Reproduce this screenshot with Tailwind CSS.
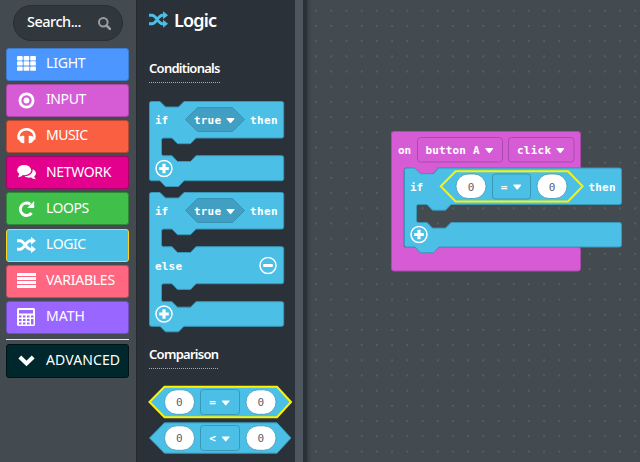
<!DOCTYPE html>
<html lang="en">
<head>
<meta charset="utf-8">
<title>Block editor</title>
<script src="https://cdn.jsdelivr.net/npm/@tailwindcss/browser@4"></script>
</head>
<body class="w-[640px] h-[462px] overflow-hidden bg-[#434a50] font-['Noto_Sans',sans-serif]">
<svg class="hidden">
  <defs>
    <symbol id="shuffle" viewBox="0 0 20 17"><path d="M0 4h3.200c4.600 0 6.200 9 11 9h2M0 13h3.200c4.600 0 6.200-9 11-9h2" fill="none" stroke="currentColor" stroke-width="3"/><path d="M14.800-.2l5.200 4.200-5.200 4.200zM14.800 8.800l5.200 4.200-5.200 4.200z" fill="currentColor"/></symbol>
    <symbol id="plus" viewBox="0 0 18 18"><circle cx="9" cy="9" r="8" fill="none" stroke="#fff" stroke-width="1.500"/><path d="M9 4.200v9.600M4.200 9h9.600" stroke="#fff" stroke-width="3.200"/></symbol>
    <symbol id="minus" viewBox="0 0 18 18"><circle cx="9" cy="9" r="8" fill="none" stroke="#fff" stroke-width="1.500"/><path d="M4.200 9h9.600" stroke="#fff" stroke-width="3"/></symbol>
    <symbol id="caret" viewBox="0 0 8 6"><path d="M.8.500h6.400q.8 0 .3.900L4.600 4.900q-.6.700-1.200 0L.5 1.400Q0 .5.800.500z" fill="#fff"/></symbol>
  </defs>
</svg>
<div class="flex h-full bg-[#434a50]">
  <nav class="w-[137px] shrink-0 pl-[6px] pr-[7px] pt-[5px] border-r border-[#24292d]">
    <div class="ml-[7px] w-[110px] h-[36px] rounded-full bg-[#30373d] border border-[#292f34] flex items-center justify-between pl-[13px] pr-[11px] text-white text-[14.500px]">
      <span class="-mt-[2px] tracking-[-0.5px] font-medium">Search...</span>
      <svg class="w-[13px] h-[13px]" viewBox="0 0 13 13" fill="none" stroke="#999da0"><circle cx="5.300" cy="5.300" r="4.300" stroke-width="2"/><path d="M8.500 8.500l3.500 3.500" stroke-width="2.500" stroke-linecap="round"/></svg>
    </div>
    <div class="mt-[6.600px] flex flex-col gap-[3.200px] text-white text-[14px]">
      <div class="h-[33px] rounded-[3px] border border-[#3e7cd0] bg-[#4c97ff] flex items-center pl-[10px] gap-[10px]">
        <svg class="w-[19px] h-[15px] -mt-px" viewBox="0 0 19 15" fill="#fff"><rect width="5.700" height="4.400" rx=".9"/><rect x="6.600" width="5.700" height="4.400" rx=".9"/><rect x="13.200" width="5.700" height="4.400" rx=".9"/><rect y="5.200" width="5.700" height="4.400" rx=".9"/><rect x="6.600" y="5.200" width="5.700" height="4.400" rx=".9"/><rect x="13.200" y="5.200" width="5.700" height="4.400" rx=".9"/><rect y="10.400" width="5.700" height="4.400" rx=".9"/><rect x="6.600" y="10.400" width="5.700" height="4.400" rx=".9"/><rect x="13.200" y="10.400" width="5.700" height="4.400" rx=".9"/></svg>
        <span class="-mt-[3px] tracking-[-0.2px]">LIGHT</span></div>
      <div class="h-[33px] rounded-[3px] border border-[#ac46ab] bg-[#d65cd6] flex items-center pl-[10px] gap-[10px]">
        <svg class="w-[19px] h-[17px]" viewBox="0 0 19 17"><circle cx="9.500" cy="8.500" r="6.600" fill="none" stroke="#fff" stroke-width="2.800"/><circle cx="9.500" cy="8.500" r="2.900" fill="#fff"/></svg>
        <span class="-mt-[3px] tracking-[-0.4px]">INPUT</span></div>
      <div class="h-[33px] rounded-[3px] border border-[#b54a31] bg-[#f95f40] flex items-center pl-[10px] gap-[10px]">
        <svg class="w-[19px] h-[16px]" viewBox="0 0 19 16"><path d="M2 11.500C.3 6 3.700 1.300 9.500 1.300S18.700 6 17 11.500" fill="none" stroke="#fff" stroke-width="2.500"/><path d="M1.600 10.500C2.500 8 5 7.600 7.300 8v7.300c-2.500-.1-5-1.300-5.700-4.800zM17.400 10.500C16.500 8 14 7.600 11.700 8v7.300c2.500-.1 5-1.300 5.700-4.800z" fill="#fff"/></svg>
        <span class="-mt-[3px] tracking-[-0.5px]">MUSIC</span></div>
      <div class="h-[33px] rounded-[3px] border border-[#a80069] bg-[#e3008c] flex items-center pl-[10px] gap-[10px]">
        <svg class="w-[19px] h-[15px]" viewBox="0 0 19 15" fill="#fff"><ellipse cx="7.200" cy="5.200" rx="7" ry="5.100"/><path d="M2.500 8L1 12.300Q4.500 12 6.500 9.500z"/><path d="M15.600 4.200c3.600 1.300 4.500 5 1.600 7.100.2 1.200.7 2 1.600 2.900-1.900.1-3.300-.5-4.500-1.600-2.900.5-5.400-.2-6.800-1.500 5 0 8.600-2.700 8.100-6.900z"/></svg>
        <span class="-mt-[3px] tracking-[-0.35px]">NETWORK</span></div>
      <div class="h-[33px] rounded-[3px] border border-[#2f8a38] bg-[#40bf4a] flex items-center pl-[10px] gap-[10px]">
        <svg class="w-[19px] h-[16px]" viewBox="0 0 19 16"><path d="M14.500 12A6.200 6.200 0 1 1 13.200 3.200" fill="none" stroke="#fff" stroke-width="3"/><path d="M17.200 0v7h-7z" fill="#fff"/></svg>
        <span class="-mt-[3px] tracking-[-0.5px]">LOOPS</span></div>
      <div class="h-[33px] rounded-[3px] border border-[#ffd21e] bg-[#4bbfe6] flex items-center pl-[10px] gap-[10px]">
        <svg class="w-[19px] h-[16px]"><use href="#shuffle"/></svg>
        <span class="-mt-[3px] tracking-[-0.4px]">LOGIC</span></div>
      <div class="h-[33px] rounded-[3px] border border-[#c04d61] bg-[#ff6680] flex items-center pl-[10px] gap-[10px]">
        <svg class="w-[19px] h-[15px] -mt-[2px]" viewBox="0 0 19 15"><path d="M0 1.500h19M0 5.500h19M0 9.500h19M0 13.500h19" stroke="#fff" stroke-width="3"/></svg>
        <span class="-mt-[3px] tracking-[-0.25px]">VARIABLES</span></div>
      <div class="h-[33px] rounded-[3px] border border-[#744dc2] bg-[#9966ff] flex items-center pl-[10px] gap-[10px]">
        <svg class="w-[19px] h-[18px]" viewBox="0 0 19 18"><path fill="#fff" fill-rule="evenodd" d="M1.500 0h15q1.500 0 1.500 1.500v15q0 1.500-1.500 1.500h-15Q0 18 0 16.500v-15Q0 0 1.500 0zM2 2v3.500h14V2zM2 7.500v2h2.500v-2zM6 7.500v2h2.500v-2zM10 7.500v2h2.500v-2zM14 7.500v2h2.500v-2zM2 11v2h2.500v-2zM6 11v2h2.500v-2zM10 11v2h2.500v-2zM14 11v5.500h2.500V11zM2 14.500v2h2.500v-2zM6 14.500v2h2.500v-2zM10 14.500v2h2.500v-2z"/></svg>
        <span class="-mt-[3px]">MATH</span></div>
    </div>
    <div class="mt-[5px] h-px bg-[#e8eaeb]"></div>
    <div class="mt-[4px] h-[34px] rounded-[3px] border border-[#001417] bg-[#00272b] flex items-center pl-[10px] gap-[10px] text-white text-[14px]">
      <svg class="w-[19px] h-[13px]" viewBox="0 0 19 13"><path d="M2.800 3l6.700 6.500L16.200 3" fill="none" stroke="#fff" stroke-width="4"/></svg>
      <span class="-mt-[3px] tracking-[0.1px]">ADVANCED</span></div>
  </nav>

  <section class="w-[158px] shrink-0 bg-[#2b3138] pl-[12px] text-white">
    <div class="h-[38px] flex items-center gap-[6px]">
      <svg class="w-[19px] h-[17px] text-[#4bbfe6]"><use href="#shuffle"/></svg>
      <h1 class="text-[18px] font-semibold leading-none pt-[2px] tracking-[-0.8px]">Logic</h1>
    </div>
    <h2 class="mt-[21px] w-fit h-[24px] text-[13px] leading-[18px] font-semibold tracking-[-0.72px] border-b border-dotted border-[#a7abae]">Conditionals</h2>
    <svg class="mt-[17px] block w-[146px] h-[92px] overflow-visible font-['DejaVu_Sans_Mono',monospace] font-bold text-[11px]" viewBox="149 100 146 92" fill="#fff">
      <path fill="#4bbfe6" stroke="#3898b8" d="M151.500 101.500H160l5.500 5.500h13l5.500-5.500h97.700q2 0 2 2V136q0 2-2 2H196l-5.500 5.700h-13L172 138h-8.500q-2 0-2 2v13.700q0 2 2 2h8.500l5.500 5.800h13l5.500-5.800h85.700q2 0 2 2v21q0 2-2 2H184l-5.500 5.800h-13l-5.500-5.800h-8.500q-2 0-2-2v-75.200q0-2 2-2z"/>
      <path fill="#409fc2" stroke="#3793b3" d="M185.500 119.500l12-12H232.500l12 12-12 12H197.500z"/>
      <text x="155" y="124" textLength="13">if</text><text x="194" y="124" textLength="27">true</text><text x="250" y="124" textLength="27.500">then</text>
      <use href="#caret" x="226" y="117.500" width="9" height="6.500"/>
      <use href="#plus" x="155" y="159.500" width="18" height="18"/>
    </svg>
    <svg class="block w-[146px] h-[146px] overflow-visible font-['DejaVu_Sans_Mono',monospace] font-bold text-[11px]" viewBox="149 192 146 146" fill="#fff">
      <path fill="#4bbfe6" stroke="#3898b8" d="M151.500 192.500H160l5.500 5.500h13l5.500-5.500h97.700q2 0 2 2V227q0 2-2 2H196l-5.500 5.700h-13L172 229h-8.500q-2 0-2 2v13.700q0 2 2 2h8.500l5.500 5.800h13l5.500-5.800h85.700q2 0 2 2v33q0 2-2 2H196l-5.500 5.700h-13l-5.500-5.700h-8.500q-2 0-2 2v14q0 2 2 2h8.500l5.500 5.500h13l5.500-5.500h85.700q2 0 2 2v20.600q0 2-2 2H184l-5.500 5.500h-13l-5.500-5.500h-8.500q-2 0-2-2V194.500q0-2 2-2z"/>
      <path fill="#409fc2" stroke="#3793b3" d="M185.500 210.500l12-12H232.500l12 12-12 12H197.500z"/>
      <text x="155" y="215" textLength="13">if</text><text x="194" y="215" textLength="27">true</text><text x="250" y="215" textLength="27.500">then</text><text x="155" y="270" textLength="27">else</text>
      <use href="#caret" x="226" y="208.500" width="9" height="6.500"/>
      <use href="#minus" x="259" y="256.500" width="18" height="18"/>
      <use href="#plus" x="155" y="305" width="18" height="18"/>
    </svg>
    <h2 class="mt-[8px] w-fit h-[23px] text-[13px] leading-[17px] font-semibold tracking-[-0.72px] border-b border-dotted border-[#a7abae]">Comparison</h2>
    <svg class="mt-[16px] block w-[146px] h-[34px] overflow-visible font-['DejaVu_Sans_Mono',monospace] text-[11px]" viewBox="149 385 146 34">
      <path fill="#4bbfe6" stroke="#fff200" stroke-width="2" d="M149.500 402l15-15.200h112.500l14 15.200-14 15.200H164.500z"/>
      <g id="operands"><rect x="164.500" y="389.800" width="30" height="24.500" rx="12.200" fill="#fff" stroke="#3898b8" stroke-width=".8"/><rect x="246" y="389.800" width="30" height="24.500" rx="12.200" fill="#fff" stroke="#3898b8" stroke-width=".8"/>
      <rect x="200.500" y="389.500" width="39" height="25" rx="3" fill="none" stroke="#3898b8"/><use href="#caret" x="221.500" y="399.800" width="8.500" height="6.500"/>
      <text x="179.300" y="406.300" text-anchor="middle" fill="#575e75">0</text><text x="260.800" y="406.300" text-anchor="middle" fill="#575e75">0</text></g>
      <text x="212.500" y="406.300" text-anchor="middle" class="font-bold" fill="#fff">=</text>
    </svg>
    <svg class="mt-[3px] block w-[146px] h-[33px] overflow-visible font-['DejaVu_Sans_Mono',monospace] text-[11px]" viewBox="149 386 146 33">
      <path fill="#4bbfe6" stroke="#3898b8" d="M149.500 402l15-15.200h112.500l14 15.200-14 15.200H164.500z"/>
      <use href="#operands"/>
      <text x="212.500" y="406.300" text-anchor="middle" class="font-bold" fill="#fff">&lt;</text>
    </svg>
  </section>
  <div class="w-[8px] shrink-0 bg-[#4d565f]"></div>
  <div class="w-[4px] shrink-0 bg-[#2b3138]"></div>

  <main class="flex-1 min-w-0">
    <svg class="block w-[333px] h-[462px] font-['DejaVu_Sans_Mono',monospace] font-bold text-[11px]" viewBox="307 0 333 462" fill="#fff">
      <defs>
        <linearGradient id="edge"><stop stop-color="#363d43"/><stop offset="1" stop-color="#434a50"/></linearGradient>
        <pattern id="dots" x="4.500" y="3.100" width="15.200" height="15.200" patternUnits="userSpaceOnUse"><rect x="6.900" y="6.900" width="1.400" height="1.400" fill="#666d74"/></pattern>
      </defs>
      <rect x="307" y="0" width="5" height="462" fill="url(#edge)"/>
      <rect x="307" y="0" width="333" height="462" fill="url(#dots)"/>
      <path fill="#d65cd6" stroke="#ac49ac" d="M394 131.500H578q2.500 0 2.500 2.500V168H435l-5.500 5.700h-13L411 168h-5q-2 0-2 2V247H578q2.500 0 2.500 2.500v19q0 2.500-2.500 2.500H394q-2.500 0-2.500-2.500V134q0-2.500 2.500-2.500z"/>
      <path fill="#4bbfe6" stroke="#3898b8" d="M406.500 168H415l5.500 5.700h13l5.500-5.700H619.500q2 0 2 2V202.500q0 2-2 2H451l-5.500 5.700h-13l-5.500-5.700h-8.500q-2 0-2 2v14q0 2 2 2h8.500l5.500 5.600h13l5.500-5.600H619.500q2 0 2 2v20.500q0 2-2 2H439l-5.500 5.800h-13l-5.500-5.800h-8.500q-2 0-2-2V170q0-2 2-2z"/>
      <path fill="#d65cd6" d="M415.200 167.400l5.500 5.800h12.600l5.500-5.800z"/>
      <rect x="417.500" y="137.500" width="85" height="24.500" rx="3" fill="none" stroke="#ac49ac"/>
      <rect x="508.500" y="137.500" width="65.500" height="24.500" rx="3" fill="none" stroke="#ac49ac"/>
      <text x="398" y="154" textLength="13">on</text><text x="425.500" y="154" textLength="54">button A</text><text x="517" y="154" textLength="34">click</text>
      <use href="#caret" x="485" y="147.500" width="8.500" height="6.500"/><use href="#caret" x="556" y="147.500" width="8.500" height="6.500"/>
      <path fill="#4bbfe6" stroke="#fff200" stroke-width="2" d="M440.800 186.300l14.800-15.100H568l14.600 15.100L568 201.400H455.600z"/>
      <rect x="456" y="174" width="30" height="24.500" rx="12.200" stroke="#3898b8" stroke-width=".8"/><rect x="537" y="174" width="30" height="24.500" rx="12.200" stroke="#3898b8" stroke-width=".8"/>
      <rect x="492.500" y="174" width="38" height="25" rx="3" fill="none" stroke="#3898b8"/>
      <text x="471" y="190.700" text-anchor="middle" class="font-normal" fill="#575e75">0</text><text x="552" y="190.700" text-anchor="middle" class="font-normal" fill="#575e75">0</text><text x="504" y="190.700" text-anchor="middle">=</text>
      <use href="#caret" x="513" y="184" width="8.500" height="6.500"/>
      <text x="410" y="190.500" textLength="13">if</text><text x="588.500" y="190.500" textLength="27">then</text>
      <use href="#plus" x="410" y="225.500" width="18" height="18"/>
    </svg>
  </main>
</div>
</body>
</html>
